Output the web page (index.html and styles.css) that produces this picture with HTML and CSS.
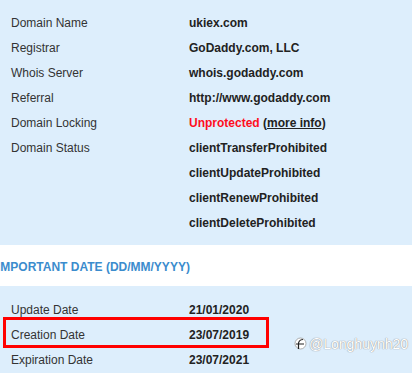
FILE: index.html
```html
<!DOCTYPE html>
<html>
<head>
<meta charset="utf-8">
<link rel="stylesheet" href="styles.css">
</head>
<body>
<div class="page">
  <section class="panel top">
    <div class="row"><div class="label">Domain Name</div><div class="value">ukiex.com</div></div>
    <div class="row"><div class="label">Registrar</div><div class="value">GoDaddy.com, LLC</div></div>
    <div class="row"><div class="label">Whois Server</div><div class="value">whois.godaddy.com</div></div>
    <div class="row"><div class="label">Referral</div><div class="value">http://www.godaddy.com</div></div>
    <div class="row"><div class="label">Domain Locking</div><div class="value"><span class="red">Unprotected</span> (<span class="link">more info</span>)</div></div>
    <div class="row"><div class="label">Domain Status</div>
      <div class="value list">
        <div>clientTransferProhibited</div>
        <div>clientUpdateProhibited</div>
        <div>clientRenewProhibited</div>
        <div>clientDeleteProhibited</div>
      </div>
    </div>
  </section>
  <div class="heading"><h2>IMPORTANT DATE (DD/MM/YYYY)</h2></div>
  <section class="panel bottom">
    <div class="row"><div class="label">Update Date</div><div class="value">21/01/2020</div></div>
    <div class="row marked"><div class="label">Creation Date</div><div class="value">23/07/2019</div></div>
    <div class="row"><div class="label">Expiration Date</div><div class="value">23/07/2021</div></div>
    <div class="watermark">
      <svg width="13" height="14" viewBox="0 0 13 14"><circle cx="6.5" cy="6.5" r="5.5" fill="#fff" stroke="#999" stroke-width="0.8"/><path d="M9 2.5 C5.5 2.5 4.5 5 4.5 7 L4.5 12 M2 7 H10" fill="none" stroke="#222" stroke-width="1.2"/></svg>
      <span>@Longhuynh20</span>
    </div>
  </section>
</div>
</body>
</html>
```
FILE: styles.css
```css
html, body {
  margin: 0;
  padding: 0;
  background: #ffffff;
}
body {
  font-family: "Liberation Sans", Arial, sans-serif;
  font-size: 12px;
  width: 412px;
  height: 373px;
  overflow: hidden;
}
.panel {
  background: #ddeefc;
}
.top {
  padding: 11px 0 9px 0;
}
.bottom {
  padding: 12px 0 0 0;
  position: relative;
}
.row {
  display: flex;
  line-height: 25px;
  position: relative;
}
.label {
  width: 178px;
  padding-left: 11px;
  color: #333333;
}
.value {
  font-weight: bold;
  color: #222222;
}
.red {
  color: #ff0d1e;
}
.link {
  text-decoration: underline;
}
.heading {
  height: 41px;
  padding-top: 10px;
  box-sizing: border-box;
  background: #ffffff;
  overflow: hidden;
}
.heading h2 {
  margin: 0 0 0 -3px;
  font-size: 12px;
  line-height: 25px;
  font-weight: bold;
  color: #3b8ccd;
  white-space: nowrap;
}
.marked::after {
  content: "";
  position: absolute;
  left: 3px;
  top: -6px;
  width: 266px;
  height: 31px;
  border: 3px solid #ff0000;
  box-sizing: border-box;
}
.watermark {
  position: absolute;
  left: 294px;
  top: 50px;
  display: flex;
  align-items: center;
  gap: 2px;
  color: #ffffff;
  font-size: 14px;
  text-shadow: 0 0 1px #888, 0 0 1px #aaa;
}
```
